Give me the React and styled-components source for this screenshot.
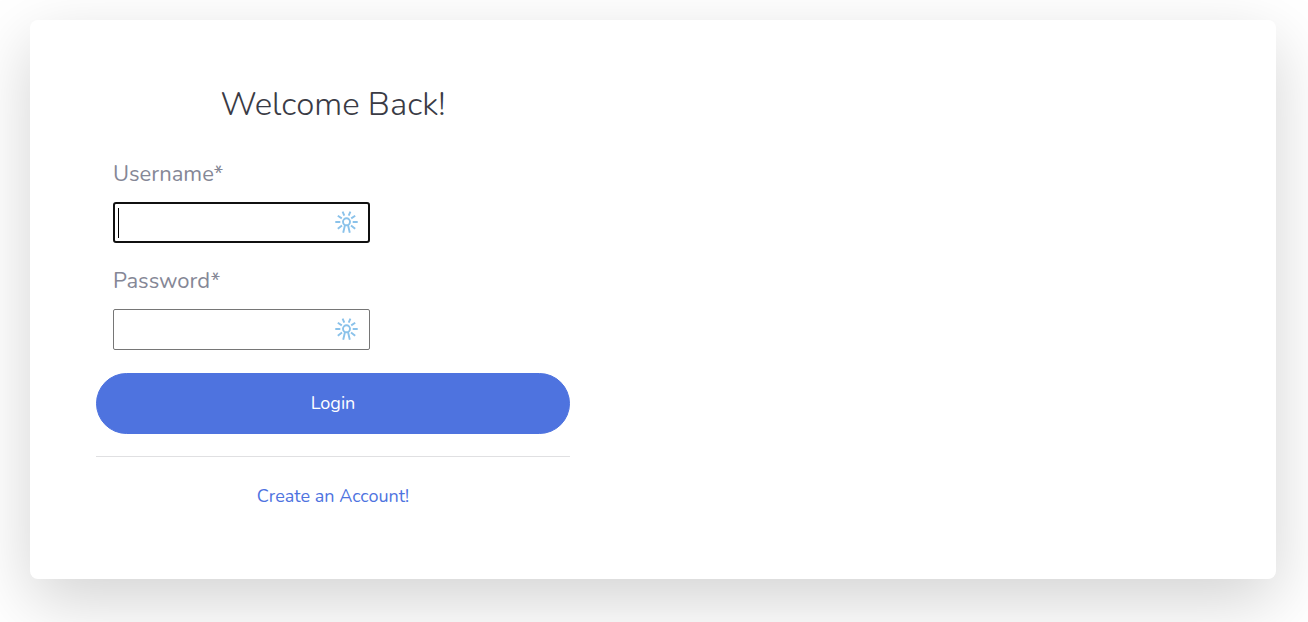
import React from 'react';
import styled, { createGlobalStyle } from 'styled-components';

const GlobalStyle = createGlobalStyle`
  *, *::before, *::after { box-sizing: border-box; }
  body {
    margin: 0;
    background: #fff;
    color: #858796;
    font-family: Nunito, Lato, sans-serif;
    font-size: 22px;
    line-height: 33px;
  }
`;

const Page = styled.main`
  padding: 20px 32px 43px 30px;
  overflow: hidden;
`;

const Card = styled.section`
  display: flex;
  background: #fff;
  border-radius: 8px;
  box-shadow: 0 22px 66px rgba(0, 0, 0, 0.175);
`;

const Panel = styled.div`
  width: 50%;
  max-width: 606px;
  padding: 66px;
`;

const Title = styled.h1`
  margin: 0 0 34px;
  color: #3a3b45;
  font-size: 33px;
  font-weight: 300;
  line-height: 38px;
  text-align: center;
`;

const Form = styled.form`
  display: flex;
  flex-direction: column;
  gap: 23px;
`;

const Fields = styled.div`
  display: flex;
  flex-direction: column;
  gap: 22px;
  padding: 0 17px;
`;

const Field = styled.div`
  display: flex;
  flex-direction: column;
  align-items: flex-start;
  gap: 11px;
`;

const Label = styled.label`
  line-height: 33px;
`;

const InputWrap = styled.div`
  position: relative;
  width: 257px;
  max-width: 100%;
`;

const Caret = styled.span`
  display: none;
  position: absolute;
  top: 6px;
  left: 5px;
  width: 1px;
  height: 30px;
  background: #000;
  pointer-events: none;
`;

const Input = styled.input`
  display: block;
  width: 100%;
  height: 41px;
  padding: 2px 40px 2px 4px;
  border: 1px solid #767676;
  border-radius: 2px;
  background: #fff;
  color: #000;
  font: inherit;

  &:focus {
    border: 2px solid #101010;
    border-radius: 3px;
    outline: none;
  }

  &:focus:placeholder-shown {
    caret-color: transparent;
  }

  &:focus:placeholder-shown ~ ${Caret} {
    display: block;
  }
`;

const KeyIcon = styled.svg`
  position: absolute;
  top: 9px;
  right: 12px;
  width: 23px;
  height: 23px;
  pointer-events: none;
`;

const LoginButton = styled.button`
  width: 100%;
  height: 61px;
  border: 1px solid #4e73df;
  border-radius: 31px;
  background: #4e73df;
  color: #fff;
  font: inherit;
  font-size: 18px;
  cursor: pointer;
`;

const Divider = styled.hr`
  margin: 22px 0;
  border: 0;
  border-top: 1px solid #e0e0e2;
`;

const Footer = styled.div`
  text-align: center;
`;

const AccountLink = styled.a`
  color: #4e73df;
  font-size: 18px;
  text-decoration: none;
`;

function PasswordManagerIcon() {
  return (
    <KeyIcon viewBox="0 0 23 23" fill="none" stroke="#8ac2ea" strokeWidth="1.9" aria-hidden="true">
      <circle cx="11.5" cy="10.8" r="3.5" />
      <path d="M10 14 8.2 21.8M13 14 14.8 21.8" />
      <path d="M0.3 11H5.3M17.7 11H22.7M2.8 4.8 6.8 7.4M20.2 4.8 16.2 7.4M7.6 0.6 9.3 4.6M15.4 0.6 13.7 4.6M2.8 17.8 7 14.6M20.2 17.8 16 14.6" />
    </KeyIcon>
  );
}

function FormField({ id, label, ...inputProps }) {
  return (
    <Field>
      <Label htmlFor={id}>{label}</Label>
      <InputWrap>
        <Input id={id} name={id} placeholder=" " required {...inputProps} />
        <Caret aria-hidden="true" />
        <PasswordManagerIcon />
      </InputWrap>
    </Field>
  );
}

export default function App() {
  return (
    <>
      <GlobalStyle />
      <Page>
        <Card>
          <Panel>
            <Title>Welcome Back!</Title>
            <Form onSubmit={(event) => event.preventDefault()}>
              <Fields>
                <FormField id="username" label="Username*" type="text" autoFocus />
                <FormField id="password" label="Password*" type="password" />
              </Fields>
              <LoginButton type="submit">Login</LoginButton>
            </Form>
            <Divider />
            <Footer>
              <AccountLink href="#register">Create an Account!</AccountLink>
            </Footer>
          </Panel>
        </Card>
      </Page>
    </>
  );
}
